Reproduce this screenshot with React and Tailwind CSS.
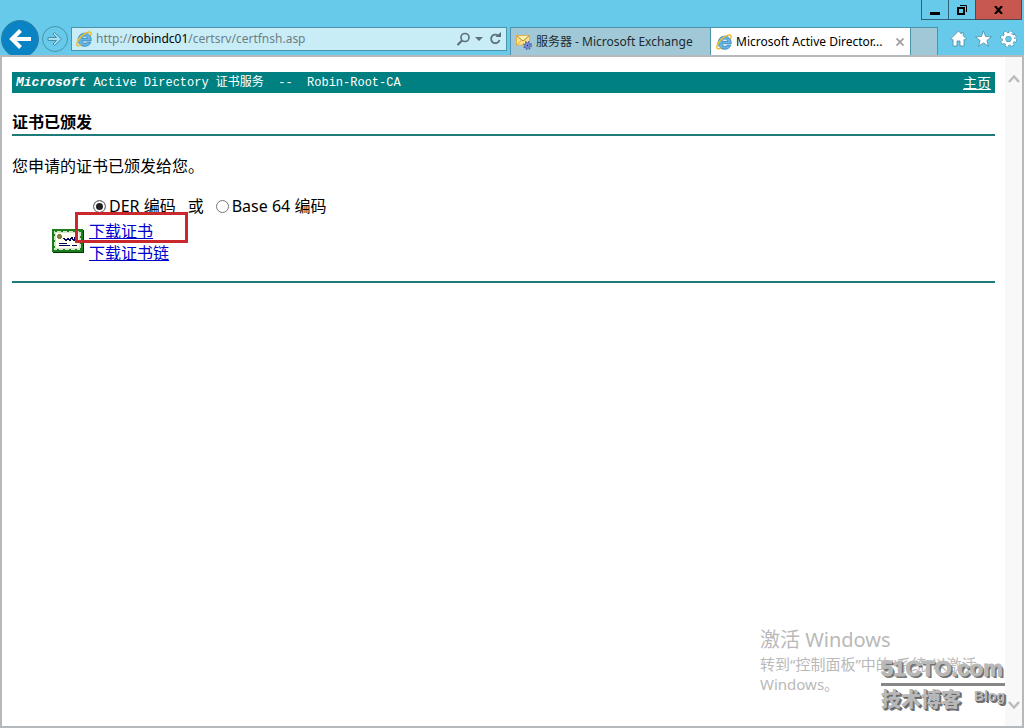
import React, { useState } from 'react';

const IeIcon = () => (
  <svg className="size-4 shrink-0" viewBox="0 0 16 16" fill="none">
    <path fillRule="evenodd" d="M15.200 9.800H6c.2 1.600 1.300 2.500 2.800 2.500 1.100 0 1.800-.4 2.300-1.100h3.700c-.9 2.500-3.200 4.100-6.100 4.100-3.800 0-6.500-2.700-6.500-6.500s2.700-6.600 6.500-6.600 6.500 2.700 6.500 6.500zM6 7.300h5.600C11.400 5.900 10.300 5 8.800 5S6.200 5.900 6 7.300z" fill="#62b5e5" stroke="#2d7fb5" strokeWidth=".8" />
    <path d="M14.300 5C15.900 2 15 .7 12.700 1 8 1.700 1.500 8.200.9 12.500c-.4 2.800 1.600 2.900 4.300 1.400" stroke="#e9bd35" strokeWidth="1.500" />
  </svg>
);

const MailIcon = () => (
  <svg className="size-4 shrink-0" viewBox="0 0 16 16">
    <rect x=".5" y="1.500" width="13" height="9.500" fill="#fbe38a" stroke="#e0b050" />
    <path d="M1 2l6 5 6-5" fill="#fdf0b4" stroke="#b98222" strokeWidth="1" />
    <path d="M1 11l4.500-5M13 11L8.500 6" fill="none" stroke="#d9a640" strokeWidth=".8" />
    <circle cx="11.500" cy="11.500" r="3.800" fill="none" stroke="#4a5fb0" strokeWidth="1.400" strokeDasharray="1.500 1.500" />
    <circle cx="11.500" cy="11.500" r="2.800" fill="#8d9ee0" stroke="#4a5fb0" strokeWidth="1" />
    <circle cx="11.500" cy="11.500" r="1" fill="#26387e" />
  </svg>
);

const CertificateIcon = () => (
  <svg className="mt-[9px] h-6 w-8 shrink-0" viewBox="0 0 32 24" shapeRendering="crispEdges">
    <rect x="1" y="1" width="31" height="23" fill="#003800" />
    <rect width="31" height="23" fill="#1d7d1d" />
    <rect x="2" y="2" width="27" height="19" fill="#d5e8cf" />
    <rect x="2.500" y="2.500" width="26" height="18" fill="none" stroke="#1d7d1d" strokeDasharray="2 4" />
    <rect x="4" y="4" width="23" height="15" fill="#fffff0" />
    <path d="M6 5h3v1h1v3H9v1H6V9H5V6h1z" fill="#808040" />
    <path d="M11.500 10v-1h1v1h1v1h1v-1h1v-1h1v1h1v1h1v-2h1v-1h1v2h1v1h1V8.500h1v-1h1v-1M22 9.500h2" fill="none" stroke="#000060" />
    <path d="M7 14.500h8M7 16.500h11M20 16.500h5" stroke="#000060" />
  </svg>
);

const WindowControls = () => (
  <div className="flex h-5 justify-end pr-0.5">
    <button aria-label="Minimize" className="flex w-7 items-center justify-center border border-t-0 border-[#2c6577]">
      <svg width="10" height="12" viewBox="0 0 10 12"><path d="M0 8h10v3H0z" /></svg>
    </button>
    <button aria-label="Restore" className="flex w-[26px] items-center justify-center border-b border-[#2c6577]">
      <svg width="10" height="10" viewBox="0 0 10 10" fill="none" stroke="#000">
        <path d="M1 3h6v6H1z" strokeWidth="2" />
        <path d="M3 .5h6.500V7" />
      </svg>
    </button>
    <button aria-label="Close" className="flex w-[47px] items-center justify-center border border-t-0 border-[#5a4448] bg-[#c75850]">
      <svg width="9" height="8" viewBox="0 0 9 8"><path d="M1 0l7 8M8 0L1 8" stroke="#000" strokeWidth="2.200" /></svg>
    </button>
  </div>
);

const AddressBar = () => (
  <div className="mt-[7px] ml-[3px] flex h-6 min-w-0 flex-1 items-center border border-[#4a93ab] bg-[#c9edf7] pl-1">
    <IeIcon />
    <a href="#address" className="ml-1 flex-1 truncate text-[12px] leading-5 text-[#6b7f86]">
      http://<span className="text-black">robindc01</span>/certsrv/certfnsh.asp
    </a>
    <button aria-label="Search">
      <svg width="15" height="15" viewBox="0 0 15 15" fill="none" stroke="#5b7079">
        <circle cx="9" cy="5.500" r="4" strokeWidth="1.600" />
        <path d="M6 8.500L1.500 13" strokeWidth="2.200" />
      </svg>
    </button>
    <button aria-label="Show address history" className="ml-1">
      <svg width="8" height="4" viewBox="0 0 8 4"><path d="M0 0h8L4 4z" fill="#5b7079" /></svg>
    </button>
    <button aria-label="Refresh" className="mr-1 ml-1.5">
      <svg width="13" height="14" viewBox="0 0 13 14" fill="none" stroke="#5b7079" strokeWidth="1.800">
        <path d="M9 3.500A4.300 4.300 0 1 0 10.500 8" />
        <path d="M6.500 5H12V0z" fill="#5b7079" stroke="none" />
      </svg>
    </button>
  </div>
);

const Tabs = () => (
  <div className="mt-[7px] ml-[3px] flex h-7 border-l border-[#4a93ab] text-[12px]">
    <button className="flex w-[199px] items-center border-t border-[#4a93ab] bg-[#a0c8d6] pl-[5px] text-[#1d2b30]">
      <MailIcon />
      <span className="ml-1 whitespace-nowrap">服务器 - Microsoft Exchange</span>
    </button>
    <div className="flex w-[201px] items-center border border-b-0 border-[#4a93ab] bg-white pl-[5px]">
      <button className="flex items-center">
        <IeIcon />
        <span className="ml-1 whitespace-nowrap">Microsoft Active Director...</span>
      </button>
      <button aria-label="Close tab" className="mr-1.5 ml-auto">
        <svg width="8" height="8" viewBox="0 0 8 8"><path d="M.5 .5l7 7M7.500 .5l-7 7" stroke="#a0a0a0" strokeWidth="1.800" /></svg>
      </button>
    </div>
    <button aria-label="New tab" className="w-[27px] border-t border-r border-[#4a93ab] bg-[#a0c8d6]" />
  </div>
);

const Toolbar = () => (
  <div className="mt-[9px] mr-[7px] ml-3 flex h-5 items-center gap-2">
    <button aria-label="Home">
      <svg width="17" height="18" viewBox="0 0 17 18" fill="#fff" stroke="#4a8ba3" strokeWidth=".8">
        <path d="M8.500 1L.8 8.700l1.400 1.400.8-.7V16h4v-5h3v5h4V9.400l.8.7 1.400-1.400-3-3V2.500h-2v1.300z" />
      </svg>
    </button>
    <button aria-label="Favorites">
      <svg width="17" height="18" viewBox="0 0 17 18" fill="#fff" stroke="#4a8ba3" strokeWidth=".8">
        <path d="M8.500 1l2.100 5.500 5.900.3-4.600 3.700 1.600 5.700-5-3.300-5 3.300 1.600-5.700L.5 6.800l5.900-.3z" />
      </svg>
    </button>
    <button aria-label="Tools">
      <svg width="17" height="18" viewBox="0 0 17 18" fill="none">
        <circle cx="8.500" cy="9" r="6.600" stroke="#4a8ba3" strokeWidth="3.400" strokeDasharray="3.180 2" />
        <circle cx="8.500" cy="9" r="4.500" stroke="#4a8ba3" strokeWidth="4" />
        <circle cx="8.500" cy="9" r="6.500" stroke="#fff" strokeWidth="2.400" strokeDasharray="2.600 2.500" />
        <circle cx="8.500" cy="9" r="4.500" stroke="#fff" strokeWidth="2.800" />
      </svg>
    </button>
  </div>
);

const BrowserChrome = () => (
  <header>
    <WindowControls />
    <div className="flex h-[35px] items-start overflow-hidden">
      <button aria-label="Back" className="ml-px flex size-[38px] shrink-0 items-center justify-center rounded-full border border-[#2f7fa5] bg-[#0a83c4]">
        <svg width="22" height="20" viewBox="0 0 22 20" fill="none" stroke="#fff" strokeWidth="4">
          <path d="M3 10h19M11.500 1.500L3 10l8.500 8.500" />
        </svg>
      </button>
      <button aria-label="Forward" className="mt-1.5 ml-[3px] flex size-[26px] shrink-0 items-center justify-center rounded-full border border-[#4a93ab]">
        <svg width="16" height="14" viewBox="0 0 16 14" fill="#a5def1" stroke="#4390ad" strokeWidth="1">
          <path d="M1 5.500h8.500L6 2l1.500-1.500L14.500 7l-7 6.500L6 12l3.500-3.500H1z" />
        </svg>
      </button>
      <AddressBar />
      <Tabs />
      <Toolbar />
    </div>
  </header>
);

const CertificatePage = () => {
  const [encoding, setEncoding] = useState('der');
  const radio = 'size-[13px] appearance-none rounded-full border border-[#777] bg-white checked:bg-[#222] checked:shadow-[inset_0_0_0_2px_white]';
  const link = 'text-[#0000cc] underline';

  return (
    <main className="min-w-0 flex-1 px-2.5 pt-[15px] text-[16px] text-black">
      <div className="flex h-[21px] items-center justify-between bg-[#008080] px-1 text-white">
        <p className="font-['Liberation_Mono','Noto_Sans_CJK_SC',monospace] text-[12px] whitespace-pre">
          <b className="text-[13px]"><i>Microsoft</i></b> Active Directory 证书服务{'  --  '}Robin-Root-CA
        </p>
        <a href="#home" className="text-[14px] underline">主页</a>
      </div>
      <h1 className="mt-[18px] border-b-2 border-[#1f7a7a] leading-[23px] font-bold">证书已颁发</h1>
      <p className="mt-[18px] leading-6">您申请的证书已颁发给您。</p>
      <div className="mt-4 ml-[81px] flex h-6 items-center whitespace-nowrap">
        <input id="der" type="radio" name="encoding" className={radio} checked={encoding === 'der'} onChange={() => setEncoding('der')} />
        <label htmlFor="der" className="ml-[3px]">DER 编码</label>
        <span className="mx-3">或</span>
        <input id="base64" type="radio" name="encoding" className={radio} checked={encoding === 'base64'} onChange={() => setEncoding('base64')} />
        <label htmlFor="base64" className="ml-[3px]">Base 64 编码</label>
      </div>
      <div className="mt-0.5 ml-10 flex gap-[5px]">
        <CertificateIcon />
        <div className="relative flex flex-col items-start leading-[22px]">
          <a href="#cert" className={link}>下载证书</a>
          <a href="#chain" className={link}>下载证书链</a>
          <div className="pointer-events-none absolute -top-2 -left-3.5 h-[31px] w-[113px] border-3 border-[#c9282d]" />
        </div>
      </div>
      <hr className="mt-[17px] border-t-2 border-[#1f7a7a]" />
    </main>
  );
};

const ScrollBar = () => (
  <div className="flex w-[17px] flex-col items-center justify-between bg-[#f8f8f8] pt-[17px] pb-4">
    <button aria-label="Scroll up">
      <svg width="12" height="9" viewBox="0 0 12 9"><path d="M1 8l5-5.500L11 8" fill="none" stroke="#bcbcbc" strokeWidth="2.500" /></svg>
    </button>
    <button aria-label="Scroll down">
      <svg width="12" height="9" viewBox="0 0 12 9"><path d="M1 1l5 5.500L11 1" fill="none" stroke="#bcbcbc" strokeWidth="2.500" /></svg>
    </button>
  </div>
);

const ActivationNotice = () => (
  <div className="pointer-events-none absolute right-[34px] bottom-8 w-[228px] text-[15px] leading-5 text-[#b9b9b9]">
    <p className="text-[20px] leading-7">激活 Windows</p>
    <p>转到“控制面板”中的“系统”以激活 Windows。</p>
  </div>
);

const BlogStamp = () => (
  <div className="pointer-events-none absolute right-[17px] bottom-3 w-[124px] font-bold text-[#b8b8b8] [text-shadow:1px_1px_0_#666,2px_2px_0_#777]">
    <p className="border-b-3 border-[#888] font-['Liberation_Sans',sans-serif] text-[22px] leading-7 whitespace-nowrap [-webkit-text-stroke:1px_#b8b8b8]">51CTO.com</p>
    <div className="flex justify-between">
      <span className="text-[20px] leading-7 font-black">技术博客</span>
      <span className="font-['Liberation_Sans',sans-serif] text-[14px] leading-5">Blog</span>
    </div>
  </div>
);

const App = () => (
  <div className="flex min-h-screen flex-col bg-[#67caea] font-['Noto_Sans','Noto_Sans_CJK_SC',sans-serif]">
    <BrowserChrome />
    <div className="relative flex flex-1 border-2 border-[#b5b9bb] bg-white">
      <CertificatePage />
      <ScrollBar />
      <ActivationNotice />
      <BlogStamp />
    </div>
  </div>
);

export default App;
